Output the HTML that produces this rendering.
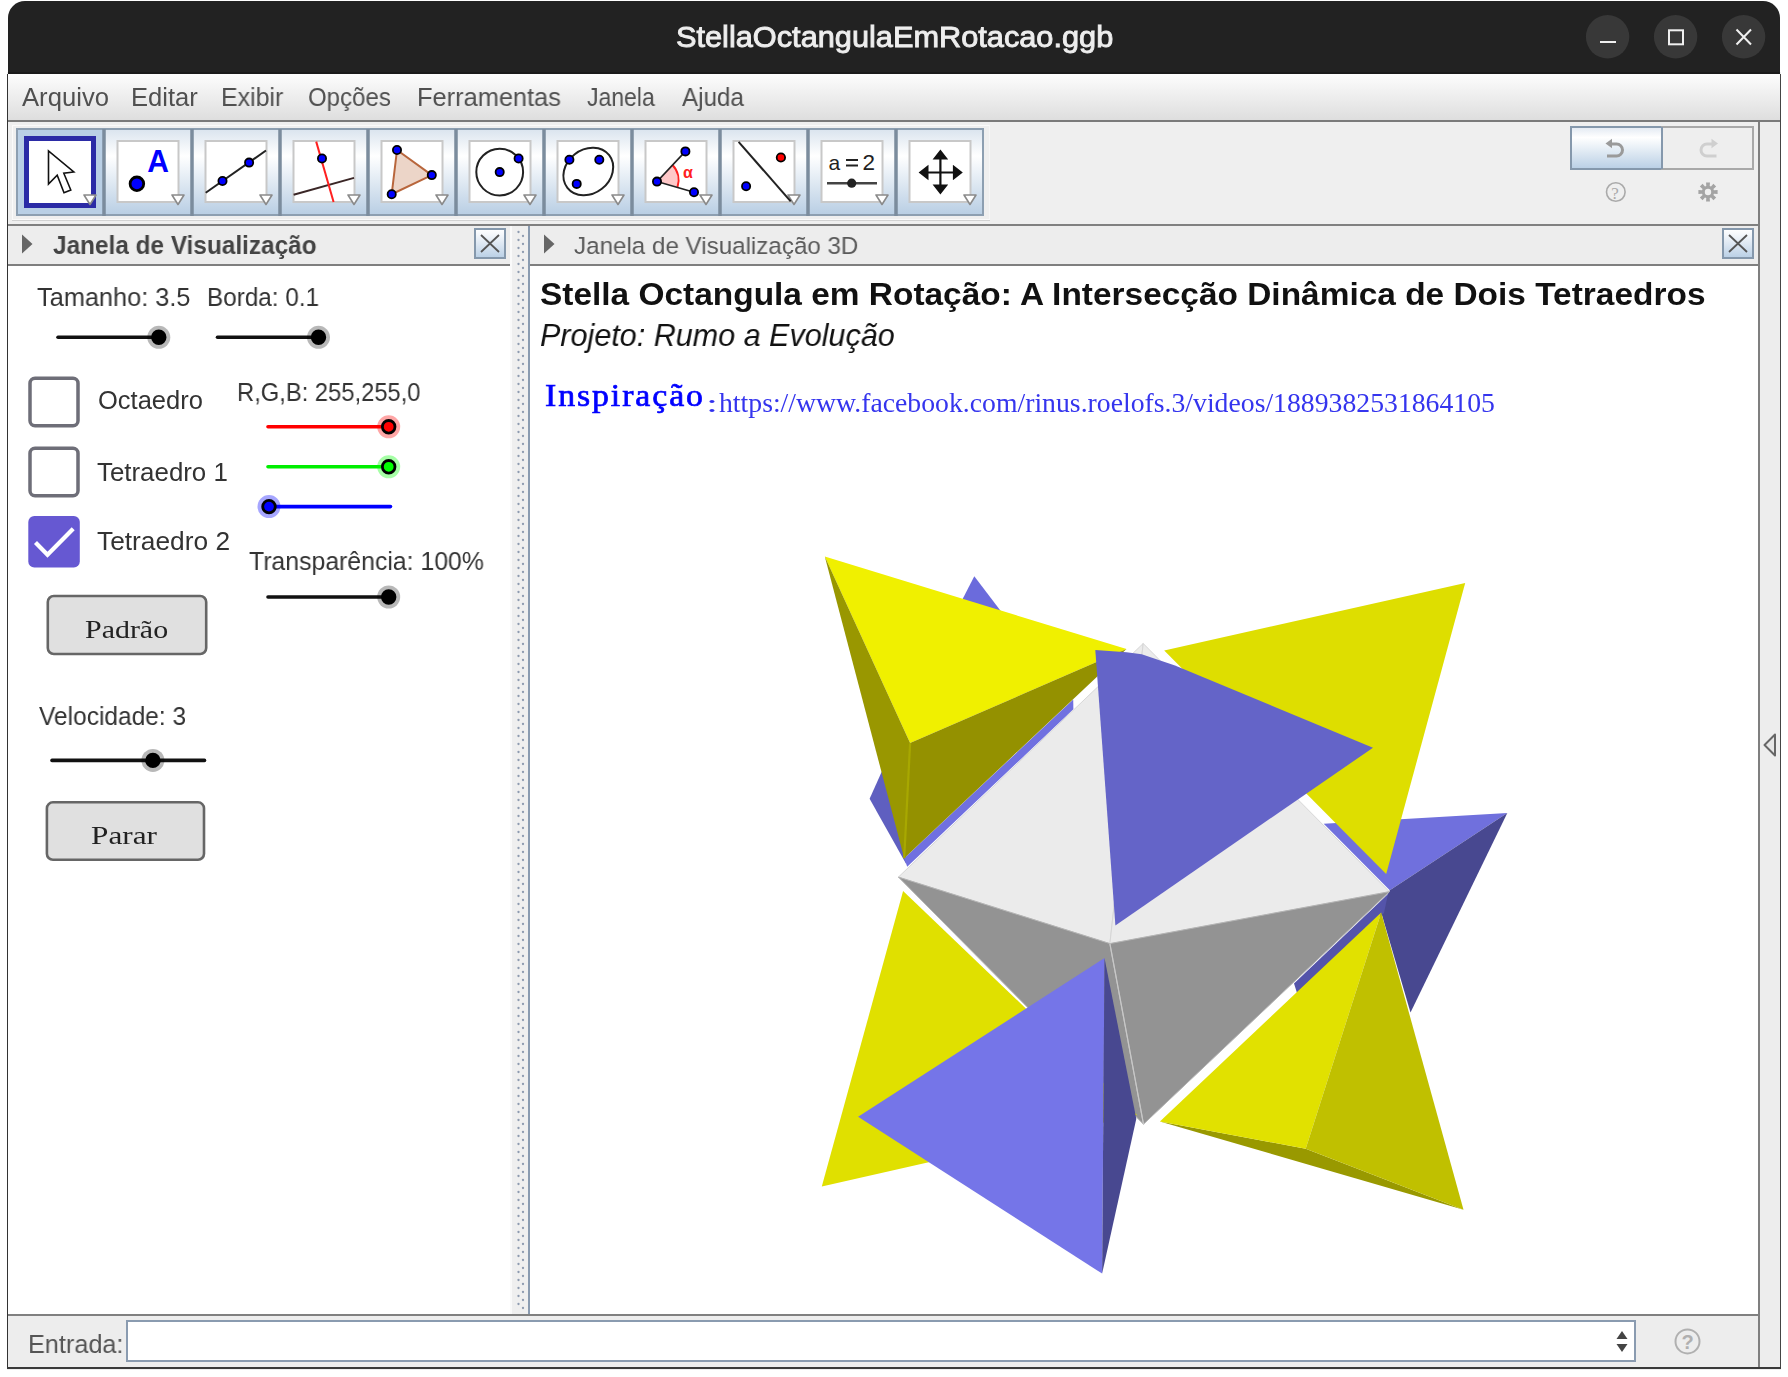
<!DOCTYPE html>
<html><head><meta charset="utf-8">
<style>
*{box-sizing:border-box;margin:0;padding:0}
html,body{width:1788px;height:1377px;overflow:hidden;background:#fff;font-family:"Liberation Sans",sans-serif}
.a{position:absolute}
.t{position:absolute;white-space:nowrap;transform-origin:0 0;will-change:transform}
svg{position:absolute;left:0;top:0}
</style></head>
<body>
<div class="a" style="left:7px;top:72px;width:1774px;height:1298px;background:#efefef"></div>
<div class="a" style="left:8px;top:1px;width:1772px;height:73px;background:#222;border-radius:17px 17px 0 0"></div>
<div class="a" style="left:8px;top:72px;width:1772px;height:2px;background:#1b1b1b"></div>
<!-- menubar -->
<div class="a" style="left:8px;top:74px;width:1772px;height:46px;background:linear-gradient(#fdfdfd,#f2f2f2 35%,#dedede)"></div>
<div class="a" style="left:8px;top:120px;width:1772px;height:2px;background:#7a7a7a"></div>
<!-- left/right window borders -->
<div class="a" style="left:7px;top:74px;width:1px;height:1295px;background:#333"></div>
<div class="a" style="left:1780px;top:74px;width:1px;height:1295px;background:#444"></div>
<!-- toolbar -->
<div class="a" style="left:8px;top:122px;width:1750px;height:102px;background:#efefef"></div>
<div class="a" style="left:12px;top:220px;width:978px;height:1px;background:#d2d2d2"></div>
<div class="a" style="left:12px;top:125px;width:978px;height:95px;border:1px solid #fafafa;border-right-color:#f6f6f6"></div>
<div class="a" style="left:8px;top:224px;width:1751px;height:2px;background:#808080"></div>
<!-- right strip -->
<div class="a" style="left:1758px;top:122px;width:2px;height:1247px;background:#7f7f7f"></div>
<div class="a" style="left:1760px;top:122px;width:20px;height:1247px;background:#ededed"></div>
<!-- panel headers -->
<div class="a" style="left:8px;top:226px;width:502px;height:38px;background:#ededed"></div>
<div class="a" style="left:8px;top:264px;width:502px;height:2px;background:#7f7f7f"></div>
<div class="a" style="left:510px;top:226px;width:18px;height:1088px;background:#efefef"></div>
<div class="a" style="left:510px;top:226px;width:2px;height:1088px;background:#fafafa"></div>
<div class="a" style="left:528px;top:226px;width:2px;height:1088px;background:#8a9bb0"></div>
<div class="a" style="left:530px;top:226px;width:1228px;height:38px;background:#ededed"></div>
<div class="a" style="left:530px;top:264px;width:1228px;height:2px;background:#7f7f7f"></div>
<!-- panels -->
<div class="a" style="left:8px;top:266px;width:502px;height:1048px;background:#fff"></div>
<div class="a" style="left:530px;top:266px;width:1228px;height:1048px;background:#fff"></div>
<!-- input bar -->
<div class="a" style="left:8px;top:1314px;width:1751px;height:2px;background:#808080"></div>
<div class="a" style="left:8px;top:1316px;width:1750px;height:51px;background:#ededed"></div>
<div class="a" style="left:7px;top:1367px;width:1774px;height:2px;background:#3a3a3a"></div>
<div class="a" style="left:126px;top:1320px;width:1510px;height:42px;background:#fff;border:2px solid #8a9bb0"></div>
<svg width="1788" height="1377" viewBox="0 0 1788 1377">
<defs>
<linearGradient id="btng" x1="0" y1="0" x2="0" y2="1"><stop offset="0" stop-color="#dae4ee"/><stop offset="0.31" stop-color="#ffffff"/><stop offset="1" stop-color="#b7cde3"/></linearGradient>
<linearGradient id="undog" x1="0" y1="0" x2="0" y2="1"><stop offset="0" stop-color="#e2e9f2"/><stop offset="0.25" stop-color="#ffffff"/><stop offset="1" stop-color="#b9cfe5"/></linearGradient>
<linearGradient id="closeg" x1="0" y1="0" x2="0" y2="1"><stop offset="0" stop-color="#ffffff"/><stop offset="0.2" stop-color="#f4f7fb"/><stop offset="1" stop-color="#b9cfe5"/></linearGradient>
</defs>
<!-- window buttons -->
<circle cx="1607.6" cy="36.8" r="21.7" fill="#383838"/>
<circle cx="1675.6" cy="36.8" r="21.7" fill="#383838"/>
<circle cx="1743.6" cy="36.8" r="21.7" fill="#383838"/>
<rect x="1600" y="41" width="16" height="2" fill="#f0f0f0"/>
<rect x="1669" y="30.3" width="14" height="14" fill="none" stroke="#f0f0f0" stroke-width="2"/>
<path d="M1736.5,29.5 L1751,44.5 M1751,29.5 L1736.5,44.5" stroke="#f0f0f0" stroke-width="2"/>
<rect x="16" y="129" width="88" height="87" fill="#b9cfe5"/><rect x="104" y="129" width="88" height="87" fill="url(#btng)"/><rect x="192" y="129" width="88" height="87" fill="url(#btng)"/><rect x="280" y="129" width="88" height="87" fill="url(#btng)"/><rect x="368" y="129" width="88" height="87" fill="url(#btng)"/><rect x="456" y="129" width="88" height="87" fill="url(#btng)"/><rect x="544" y="129" width="88" height="87" fill="url(#btng)"/><rect x="632" y="129" width="88" height="87" fill="url(#btng)"/><rect x="720" y="129" width="88" height="87" fill="url(#btng)"/><rect x="808" y="129" width="88" height="87" fill="url(#btng)"/><rect x="896" y="129" width="88" height="87" fill="url(#btng)"/><rect x="17" y="129" width="966" height="86" fill="none" stroke="#8d9fb1" stroke-width="2"/><rect x="102.25" y="129" width="3.5" height="87" fill="#7b8c9d"/><rect x="190.25" y="129" width="3.5" height="87" fill="#7b8c9d"/><rect x="278.25" y="129" width="3.5" height="87" fill="#7b8c9d"/><rect x="366.25" y="129" width="3.5" height="87" fill="#7b8c9d"/><rect x="454.25" y="129" width="3.5" height="87" fill="#7b8c9d"/><rect x="542.25" y="129" width="3.5" height="87" fill="#7b8c9d"/><rect x="630.25" y="129" width="3.5" height="87" fill="#7b8c9d"/><rect x="718.25" y="129" width="3.5" height="87" fill="#7b8c9d"/><rect x="806.25" y="129" width="3.5" height="87" fill="#7b8c9d"/><rect x="894.25" y="129" width="3.5" height="87" fill="#7b8c9d"/><rect x="117.5" y="141" width="61" height="61" fill="#fff" stroke="#c8c8c8" stroke-width="2"/><rect x="205.5" y="141" width="61" height="61" fill="#fff" stroke="#c8c8c8" stroke-width="2"/><rect x="293.5" y="141" width="61" height="61" fill="#fff" stroke="#c8c8c8" stroke-width="2"/><rect x="381.5" y="141" width="61" height="61" fill="#fff" stroke="#c8c8c8" stroke-width="2"/><rect x="469.5" y="141" width="61" height="61" fill="#fff" stroke="#c8c8c8" stroke-width="2"/><rect x="557.5" y="141" width="61" height="61" fill="#fff" stroke="#c8c8c8" stroke-width="2"/><rect x="645.5" y="141" width="61" height="61" fill="#fff" stroke="#c8c8c8" stroke-width="2"/><rect x="733.5" y="141" width="61" height="61" fill="#fff" stroke="#c8c8c8" stroke-width="2"/><rect x="821.5" y="141" width="61" height="61" fill="#fff" stroke="#c8c8c8" stroke-width="2"/><rect x="909.5" y="141" width="61" height="61" fill="#fff" stroke="#c8c8c8" stroke-width="2"/><rect x="26.5" y="138.5" width="67" height="67" fill="#fff" stroke="#2b2ba6" stroke-width="5"/><path d="M84,195 L96,195 L90,204.5 Z" fill="#fff" stroke="#8a8a8a" stroke-width="1.6" stroke-linejoin="round"/><path d="M172,195 L184,195 L178,204.5 Z" fill="#fff" stroke="#8a8a8a" stroke-width="1.6" stroke-linejoin="round"/><path d="M260,195 L272,195 L266,204.5 Z" fill="#fff" stroke="#8a8a8a" stroke-width="1.6" stroke-linejoin="round"/><path d="M348,195 L360,195 L354,204.5 Z" fill="#fff" stroke="#8a8a8a" stroke-width="1.6" stroke-linejoin="round"/><path d="M436,195 L448,195 L442,204.5 Z" fill="#fff" stroke="#8a8a8a" stroke-width="1.6" stroke-linejoin="round"/><path d="M524,195 L536,195 L530,204.5 Z" fill="#fff" stroke="#8a8a8a" stroke-width="1.6" stroke-linejoin="round"/><path d="M612,195 L624,195 L618,204.5 Z" fill="#fff" stroke="#8a8a8a" stroke-width="1.6" stroke-linejoin="round"/><path d="M700,195 L712,195 L706,204.5 Z" fill="#fff" stroke="#8a8a8a" stroke-width="1.6" stroke-linejoin="round"/><path d="M788,195 L800,195 L794,204.5 Z" fill="#fff" stroke="#8a8a8a" stroke-width="1.6" stroke-linejoin="round"/><path d="M876,195 L888,195 L882,204.5 Z" fill="#fff" stroke="#8a8a8a" stroke-width="1.6" stroke-linejoin="round"/><path d="M964,195 L976,195 L970,204.5 Z" fill="#fff" stroke="#8a8a8a" stroke-width="1.6" stroke-linejoin="round"/>
<path d="M48.5,151 L48.5,184 L57.2,175.2 L64,192.8 L70.8,190 L63.8,173.2 L73.8,172 Z" fill="#fff" stroke="#111" stroke-width="1.6" stroke-linejoin="miter"/><circle cx="136.9" cy="183.8" r="6.8" fill="#0000ff" stroke="#000" stroke-width="2.8"/><text x="147.2" y="171.8" font-family="Liberation Sans" font-weight="bold" font-size="31" fill="#0000ff" transform="translate(147.2,171.8) scale(0.97,1.03) translate(-147.2,-171.8)">A</text><line x1="205.7" y1="192.8" x2="266" y2="150.5" stroke="#222" stroke-width="2"/><circle cx="222.5" cy="181" r="4.1" fill="#0000ff" stroke="#000" stroke-width="1.8"/><circle cx="249.1" cy="162.6" r="4.1" fill="#0000ff" stroke="#000" stroke-width="1.8"/><line x1="293.6" y1="194.8" x2="354" y2="177.9" stroke="#3a2626" stroke-width="2"/><line x1="316.2" y1="141.6" x2="333.6" y2="202" stroke="#ff2020" stroke-width="2"/><circle cx="322" cy="158.5" r="4.1" fill="#0000ff" stroke="#000" stroke-width="1.8"/><path d="M397,150 L431.8,175.1 L391.7,194.2 Z" fill="#ecd5c8" stroke="#b8663c" stroke-width="2"/><circle cx="397" cy="150" r="4.1" fill="#0000ff" stroke="#000" stroke-width="1.8"/><circle cx="431.8" cy="175.1" r="4.1" fill="#0000ff" stroke="#000" stroke-width="1.8"/><circle cx="391.7" cy="194.2" r="4.1" fill="#0000ff" stroke="#000" stroke-width="1.8"/><circle cx="499.7" cy="172.1" r="23.4" fill="none" stroke="#222" stroke-width="2"/><circle cx="499.7" cy="172.1" r="4.1" fill="#0000ff" stroke="#000" stroke-width="1.8"/><circle cx="518.6" cy="158.5" r="4.1" fill="#0000ff" stroke="#000" stroke-width="1.8"/><ellipse cx="588.3" cy="171.5" rx="26.5" ry="22" transform="rotate(-38 588.3 171.5)" fill="none" stroke="#222" stroke-width="2"/><circle cx="569.4" cy="159.7" r="4.1" fill="#0000ff" stroke="#000" stroke-width="1.8"/><circle cx="599.3" cy="159.7" r="4.1" fill="#0000ff" stroke="#000" stroke-width="1.8"/><circle cx="576.7" cy="183.9" r="4.1" fill="#0000ff" stroke="#000" stroke-width="1.8"/><path d="M657,181.6 L672.5,165 A22,22 0 0 1 677.5,187 Z" fill="#ffc8c8" stroke="none"/><path d="M672.5,165 A22,22 0 0 1 677.5,187" fill="none" stroke="#ff2020" stroke-width="2"/><line x1="657" y1="181.6" x2="685.4" y2="151.4" stroke="#222" stroke-width="1.6"/><line x1="657" y1="181.6" x2="694" y2="192.2" stroke="#222" stroke-width="1.6"/><circle cx="657" cy="181.6" r="4.1" fill="#0000ff" stroke="#000" stroke-width="1.8"/><circle cx="685.4" cy="151.4" r="4.1" fill="#0000ff" stroke="#000" stroke-width="1.8"/><circle cx="694" cy="192.2" r="4.1" fill="#0000ff" stroke="#000" stroke-width="1.8"/><text x="683" y="178" font-family="Liberation Sans" font-size="16" font-weight="bold" fill="#ff2020">α</text><line x1="738.6" y1="141.9" x2="790.7" y2="201.3" stroke="#222" stroke-width="2"/><circle cx="746.1" cy="186.2" r="4.1" fill="#0000ff" stroke="#000" stroke-width="1.8"/><circle cx="780.9" cy="157.5" r="4.2" fill="#ff0000" stroke="#000" stroke-width="1.8"/><text x="828.5" y="170.3" font-family="Liberation Sans" font-size="21" fill="#222">a</text><rect x="846" y="159" width="12" height="2" fill="#222"/><rect x="846" y="164.5" width="12" height="2" fill="#222"/><text x="862.5" y="170.3" font-family="Liberation Sans" font-size="22.5" fill="#222">2</text><line x1="827" y1="183.2" x2="877" y2="183.2" stroke="#444" stroke-width="2.6"/><circle cx="851.7" cy="183.2" r="4.6" fill="#222"/><path d="M940.4,155 V190 M922,172.5 H959" stroke="#111" stroke-width="2.2"/><path d="M940.4,149.6 L948.2,159.5 L932.6,159.5 Z M940.4,194.4 L948.2,184.5 L932.6,184.5 Z M918.6,172.5 L928.5,164.7 L928.5,180.3 Z M962.8,172.5 L952.9,164.7 L952.9,180.3 Z" fill="#111"/>

<rect x="1571" y="127" width="91" height="42" fill="url(#undog)" stroke="#8598ac" stroke-width="2"/>
<rect x="1662" y="127" width="91" height="42" fill="#eeeeee" stroke="#a8a8a8" stroke-width="2"/>
<rect x="1661" y="127" width="2" height="42" fill="#8598ac"/>
<path d="M1610.5,144 H1616.5 A6,6 0 0 1 1616.5,156 H1607" fill="none" stroke="#9a9a9a" stroke-width="3"/>
<path d="M1605.5,143.5 L1612,138.8 L1612,148.2 Z" fill="#9a9a9a"/>
<path d="M1713,144 H1707 A6,6 0 0 0 1707,156 H1716.5" fill="none" stroke="#cfcfcf" stroke-width="3"/>
<path d="M1718,143.5 L1711.5,138.8 L1711.5,148.2 Z" fill="#cfcfcf"/>
<circle cx="1615.8" cy="192" r="9.3" fill="none" stroke="#aaaaaa" stroke-width="1.6"/>
<text x="1611.3" y="198.5" font-family="Liberation Serif" font-size="17" fill="#aaaaaa">?</text>
<path d="M1713.96,190.29 L1717.60,190.05 L1717.60,193.95 L1713.96,193.71 L1713.42,195.00 L1716.17,197.41 L1713.41,200.17 L1711.00,197.42 L1709.71,197.96 L1709.95,201.60 L1706.05,201.60 L1706.29,197.96 L1705.00,197.42 L1702.59,200.17 L1699.83,197.41 L1702.58,195.00 L1702.04,193.71 L1698.40,193.95 L1698.40,190.05 L1702.04,190.29 L1702.58,189.00 L1699.83,186.59 L1702.59,183.83 L1705.00,186.58 L1706.29,186.04 L1706.05,182.40 L1709.95,182.40 L1709.71,186.04 L1711.00,186.58 L1713.41,183.83 L1716.17,186.59 L1713.42,189.00 Z M1711.2,192 A3.2,3.2 0 1 0 1704.8,192 A3.2,3.2 0 1 0 1711.2,192 Z" fill="#a4a4a4" fill-rule="evenodd"/>
<line x1="58" y1="337.3" x2="158.8" y2="337.3" stroke="#111" stroke-width="3.6" stroke-linecap="round"/><circle cx="158.8" cy="337.3" r="11.5" fill="rgba(0,0,0,0.28)"/><circle cx="158.8" cy="337.3" r="6.3" fill="#000" stroke="#000" stroke-width="2.8"/><line x1="217.5" y1="337.3" x2="318.5" y2="337.3" stroke="#111" stroke-width="3.6" stroke-linecap="round"/><circle cx="318.5" cy="337.3" r="11.5" fill="rgba(0,0,0,0.28)"/><circle cx="318.5" cy="337.3" r="6.3" fill="#000" stroke="#000" stroke-width="2.8"/><line x1="268" y1="426.8" x2="388.7" y2="426.8" stroke="#ff0000" stroke-width="3.6" stroke-linecap="round"/><circle cx="388.7" cy="426.8" r="11.5" fill="rgba(255,0,0,0.35)"/><circle cx="388.7" cy="426.8" r="6.3" fill="#ff0000" stroke="#000" stroke-width="2.8"/><line x1="268" y1="466.8" x2="388.7" y2="466.8" stroke="#00ee00" stroke-width="3.6" stroke-linecap="round"/><circle cx="388.7" cy="466.8" r="11.5" fill="rgba(0,255,0,0.35)"/><circle cx="388.7" cy="466.8" r="6.3" fill="#00ff00" stroke="#000" stroke-width="2.8"/><line x1="269" y1="506.6" x2="390.5" y2="506.6" stroke="#0000ff" stroke-width="3.6" stroke-linecap="round"/><circle cx="269" cy="506.6" r="11.5" fill="rgba(0,0,255,0.35)"/><circle cx="269" cy="506.6" r="6.3" fill="#0000ff" stroke="#000" stroke-width="2.8"/><line x1="268" y1="597" x2="388.7" y2="597" stroke="#111" stroke-width="3.6" stroke-linecap="round"/><circle cx="388.7" cy="597" r="11.5" fill="rgba(0,0,0,0.28)"/><circle cx="388.7" cy="597" r="6.3" fill="#000" stroke="#000" stroke-width="2.8"/><line x1="52" y1="760.4" x2="204.5" y2="760.4" stroke="#111" stroke-width="3.6" stroke-linecap="round"/><circle cx="152.9" cy="760.4" r="11.5" fill="rgba(0,0,0,0.28)"/><circle cx="152.9" cy="760.4" r="6.3" fill="#000" stroke="#000" stroke-width="2.8"/><rect x="30" y="378.25" width="48" height="47.5" rx="5" fill="#fff" stroke="#6e6e78" stroke-width="3.5"/><rect x="30" y="448.15" width="48" height="47.5" rx="5" fill="#fff" stroke="#6e6e78" stroke-width="3.5"/><rect x="28.3" y="516" width="51.5" height="51.5" rx="6" fill="#6658d2"/><path d="M35.5,542.5 L47.5,554.8 L73.2,528.8" fill="none" stroke="#fff" stroke-width="4.2"/><rect x="47.8" y="596" width="158.4" height="58" rx="6" fill="#e0e0e0" stroke="#666" stroke-width="2.6"/><rect x="46.9" y="802.3" width="157.1" height="57.5" rx="6" fill="#e0e0e0" stroke="#666" stroke-width="2.6"/>
<polygon points="974.3,576.3 958,608 1003,614" fill="#6b6bdc" />
<polygon points="887,760 869.6,798.7 906.2,864 906,780" fill="#5f5fc0" />
<polygon points="904.2,858.2 1073.2,699.6 1073.4,709.2 907.2,866.8" fill="#7070e0" />
<polygon points="1323.7,823.7 1507.3,813 1389.8,890.2" fill="#7070dd" />
<polygon points="1507.3,813 1389.8,890.2 1383.7,902 1381.2,912.5 1410.5,1012.5" fill="#484890" />
<polygon points="1294,983.5 1388,894 1384,913 1297,993" fill="#5454aa" />
<polygon points="824.8,556.6 1126.5,649.0 910.1,743.1" fill="#f0f000" />
<polygon points="824.8,556.6 910.1,743.1 904.2,858.2" fill="#999700" />
<polygon points="910.1,743.1 1126.5,649.0 904.2,858.2" fill="#949100" />
<line x1="910.1" y1="743.1" x2="904.2" y2="858.2" stroke="#a8a800" stroke-width="2.2"/>
<polygon points="1164.2,650.4 1465.2,583 1386.2,874" fill="#dede00" />
<polygon points="1143.2,643.5 898.4,877.1 1109.9,943.6" fill="#ebebeb" stroke="#d6d6d6" stroke-width="1" stroke-linejoin="round"/>
<polygon points="1143.2,643.5 1109.9,943.6 1389.3,891.7" fill="#ebebeb" stroke="#d6d6d6" stroke-width="1" stroke-linejoin="round"/>
<polygon points="898.4,877.1 1109.9,943.6 1143.5,1124.2" fill="#939393" stroke="#b4b4b4" stroke-width="1"/>
<polygon points="1109.9,943.6 1389.3,891.7 1143.5,1124.2" fill="#939393" stroke="#b4b4b4" stroke-width="1"/>
<line x1="1109.9" y1="943.6" x2="1143.5" y2="1124.2" stroke="#c8c8c8" stroke-width="1.2"/>
<polygon points="1095.3,650.1 1126.5,652.2 1141.7,654.2 1175,665.6 1373,747.7 1115.4,925.4" fill="#6464c8" />
<polygon points="903.1,891 821.8,1186.5 1137,1115" fill="#e0e000" />
<polygon points="858.1,1116.7 1104.5,958.1 1102.1,1273.6" fill="#7575e8" />
<polygon points="1104.5,958.1 1136.3,1118.8 1102.1,1273.6" fill="#484890" />
<polygon points="1159.9,1121.5 1305.7,1148.7 1463.5,1209.7" fill="#999900" />
<polygon points="1381.2,912.5 1159.9,1121.5 1305.7,1148.7" fill="#e1e100" />
<polygon points="1381.2,912.5 1305.7,1148.7 1463.5,1209.7" fill="#c0c000" />
<!-- header triangles -->
<path d="M22,234.5 L32.5,244 L22,253.5 Z" fill="#666"/>
<path d="M544,234.5 L554.5,244 L544,253.5 Z" fill="#666"/>
<rect x="475" y="229" width="30" height="29" fill="url(#closeg)" stroke="#8598ac" stroke-width="2"/>
<path d="M481,235 L499,252 M499,235 L481,252" stroke="#555" stroke-width="1.8"/>
<rect x="1723" y="229" width="30" height="29" fill="url(#closeg)" stroke="#8598ac" stroke-width="2"/>
<path d="M1729,235 L1747,252 M1747,235 L1729,252" stroke="#555" stroke-width="1.8"/>
<!-- divider dots -->
<circle cx="518.5" cy="232" r="1.15" fill="#8e9bb0"/><circle cx="523" cy="236" r="1.15" fill="#8e9bb0"/><circle cx="518.5" cy="240" r="1.15" fill="#8e9bb0"/><circle cx="523" cy="244" r="1.15" fill="#8e9bb0"/><circle cx="518.5" cy="248" r="1.15" fill="#8e9bb0"/><circle cx="523" cy="252" r="1.15" fill="#8e9bb0"/><circle cx="518.5" cy="256" r="1.15" fill="#8e9bb0"/><circle cx="523" cy="260" r="1.15" fill="#8e9bb0"/><circle cx="518.5" cy="264" r="1.15" fill="#8e9bb0"/><circle cx="523" cy="268" r="1.15" fill="#8e9bb0"/><circle cx="518.5" cy="272" r="1.15" fill="#8e9bb0"/><circle cx="523" cy="276" r="1.15" fill="#8e9bb0"/><circle cx="518.5" cy="280" r="1.15" fill="#8e9bb0"/><circle cx="523" cy="284" r="1.15" fill="#8e9bb0"/><circle cx="518.5" cy="288" r="1.15" fill="#8e9bb0"/><circle cx="523" cy="292" r="1.15" fill="#8e9bb0"/><circle cx="518.5" cy="296" r="1.15" fill="#8e9bb0"/><circle cx="523" cy="300" r="1.15" fill="#8e9bb0"/><circle cx="518.5" cy="304" r="1.15" fill="#8e9bb0"/><circle cx="523" cy="308" r="1.15" fill="#8e9bb0"/><circle cx="518.5" cy="312" r="1.15" fill="#8e9bb0"/><circle cx="523" cy="316" r="1.15" fill="#8e9bb0"/><circle cx="518.5" cy="320" r="1.15" fill="#8e9bb0"/><circle cx="523" cy="324" r="1.15" fill="#8e9bb0"/><circle cx="518.5" cy="328" r="1.15" fill="#8e9bb0"/><circle cx="523" cy="332" r="1.15" fill="#8e9bb0"/><circle cx="518.5" cy="336" r="1.15" fill="#8e9bb0"/><circle cx="523" cy="340" r="1.15" fill="#8e9bb0"/><circle cx="518.5" cy="344" r="1.15" fill="#8e9bb0"/><circle cx="523" cy="348" r="1.15" fill="#8e9bb0"/><circle cx="518.5" cy="352" r="1.15" fill="#8e9bb0"/><circle cx="523" cy="356" r="1.15" fill="#8e9bb0"/><circle cx="518.5" cy="360" r="1.15" fill="#8e9bb0"/><circle cx="523" cy="364" r="1.15" fill="#8e9bb0"/><circle cx="518.5" cy="368" r="1.15" fill="#8e9bb0"/><circle cx="523" cy="372" r="1.15" fill="#8e9bb0"/><circle cx="518.5" cy="376" r="1.15" fill="#8e9bb0"/><circle cx="523" cy="380" r="1.15" fill="#8e9bb0"/><circle cx="518.5" cy="384" r="1.15" fill="#8e9bb0"/><circle cx="523" cy="388" r="1.15" fill="#8e9bb0"/><circle cx="518.5" cy="392" r="1.15" fill="#8e9bb0"/><circle cx="523" cy="396" r="1.15" fill="#8e9bb0"/><circle cx="518.5" cy="400" r="1.15" fill="#8e9bb0"/><circle cx="523" cy="404" r="1.15" fill="#8e9bb0"/><circle cx="518.5" cy="408" r="1.15" fill="#8e9bb0"/><circle cx="523" cy="412" r="1.15" fill="#8e9bb0"/><circle cx="518.5" cy="416" r="1.15" fill="#8e9bb0"/><circle cx="523" cy="420" r="1.15" fill="#8e9bb0"/><circle cx="518.5" cy="424" r="1.15" fill="#8e9bb0"/><circle cx="523" cy="428" r="1.15" fill="#8e9bb0"/><circle cx="518.5" cy="432" r="1.15" fill="#8e9bb0"/><circle cx="523" cy="436" r="1.15" fill="#8e9bb0"/><circle cx="518.5" cy="440" r="1.15" fill="#8e9bb0"/><circle cx="523" cy="444" r="1.15" fill="#8e9bb0"/><circle cx="518.5" cy="448" r="1.15" fill="#8e9bb0"/><circle cx="523" cy="452" r="1.15" fill="#8e9bb0"/><circle cx="518.5" cy="456" r="1.15" fill="#8e9bb0"/><circle cx="523" cy="460" r="1.15" fill="#8e9bb0"/><circle cx="518.5" cy="464" r="1.15" fill="#8e9bb0"/><circle cx="523" cy="468" r="1.15" fill="#8e9bb0"/><circle cx="518.5" cy="472" r="1.15" fill="#8e9bb0"/><circle cx="523" cy="476" r="1.15" fill="#8e9bb0"/><circle cx="518.5" cy="480" r="1.15" fill="#8e9bb0"/><circle cx="523" cy="484" r="1.15" fill="#8e9bb0"/><circle cx="518.5" cy="488" r="1.15" fill="#8e9bb0"/><circle cx="523" cy="492" r="1.15" fill="#8e9bb0"/><circle cx="518.5" cy="496" r="1.15" fill="#8e9bb0"/><circle cx="523" cy="500" r="1.15" fill="#8e9bb0"/><circle cx="518.5" cy="504" r="1.15" fill="#8e9bb0"/><circle cx="523" cy="508" r="1.15" fill="#8e9bb0"/><circle cx="518.5" cy="512" r="1.15" fill="#8e9bb0"/><circle cx="523" cy="516" r="1.15" fill="#8e9bb0"/><circle cx="518.5" cy="520" r="1.15" fill="#8e9bb0"/><circle cx="523" cy="524" r="1.15" fill="#8e9bb0"/><circle cx="518.5" cy="528" r="1.15" fill="#8e9bb0"/><circle cx="523" cy="532" r="1.15" fill="#8e9bb0"/><circle cx="518.5" cy="536" r="1.15" fill="#8e9bb0"/><circle cx="523" cy="540" r="1.15" fill="#8e9bb0"/><circle cx="518.5" cy="544" r="1.15" fill="#8e9bb0"/><circle cx="523" cy="548" r="1.15" fill="#8e9bb0"/><circle cx="518.5" cy="552" r="1.15" fill="#8e9bb0"/><circle cx="523" cy="556" r="1.15" fill="#8e9bb0"/><circle cx="518.5" cy="560" r="1.15" fill="#8e9bb0"/><circle cx="523" cy="564" r="1.15" fill="#8e9bb0"/><circle cx="518.5" cy="568" r="1.15" fill="#8e9bb0"/><circle cx="523" cy="572" r="1.15" fill="#8e9bb0"/><circle cx="518.5" cy="576" r="1.15" fill="#8e9bb0"/><circle cx="523" cy="580" r="1.15" fill="#8e9bb0"/><circle cx="518.5" cy="584" r="1.15" fill="#8e9bb0"/><circle cx="523" cy="588" r="1.15" fill="#8e9bb0"/><circle cx="518.5" cy="592" r="1.15" fill="#8e9bb0"/><circle cx="523" cy="596" r="1.15" fill="#8e9bb0"/><circle cx="518.5" cy="600" r="1.15" fill="#8e9bb0"/><circle cx="523" cy="604" r="1.15" fill="#8e9bb0"/><circle cx="518.5" cy="608" r="1.15" fill="#8e9bb0"/><circle cx="523" cy="612" r="1.15" fill="#8e9bb0"/><circle cx="518.5" cy="616" r="1.15" fill="#8e9bb0"/><circle cx="523" cy="620" r="1.15" fill="#8e9bb0"/><circle cx="518.5" cy="624" r="1.15" fill="#8e9bb0"/><circle cx="523" cy="628" r="1.15" fill="#8e9bb0"/><circle cx="518.5" cy="632" r="1.15" fill="#8e9bb0"/><circle cx="523" cy="636" r="1.15" fill="#8e9bb0"/><circle cx="518.5" cy="640" r="1.15" fill="#8e9bb0"/><circle cx="523" cy="644" r="1.15" fill="#8e9bb0"/><circle cx="518.5" cy="648" r="1.15" fill="#8e9bb0"/><circle cx="523" cy="652" r="1.15" fill="#8e9bb0"/><circle cx="518.5" cy="656" r="1.15" fill="#8e9bb0"/><circle cx="523" cy="660" r="1.15" fill="#8e9bb0"/><circle cx="518.5" cy="664" r="1.15" fill="#8e9bb0"/><circle cx="523" cy="668" r="1.15" fill="#8e9bb0"/><circle cx="518.5" cy="672" r="1.15" fill="#8e9bb0"/><circle cx="523" cy="676" r="1.15" fill="#8e9bb0"/><circle cx="518.5" cy="680" r="1.15" fill="#8e9bb0"/><circle cx="523" cy="684" r="1.15" fill="#8e9bb0"/><circle cx="518.5" cy="688" r="1.15" fill="#8e9bb0"/><circle cx="523" cy="692" r="1.15" fill="#8e9bb0"/><circle cx="518.5" cy="696" r="1.15" fill="#8e9bb0"/><circle cx="523" cy="700" r="1.15" fill="#8e9bb0"/><circle cx="518.5" cy="704" r="1.15" fill="#8e9bb0"/><circle cx="523" cy="708" r="1.15" fill="#8e9bb0"/><circle cx="518.5" cy="712" r="1.15" fill="#8e9bb0"/><circle cx="523" cy="716" r="1.15" fill="#8e9bb0"/><circle cx="518.5" cy="720" r="1.15" fill="#8e9bb0"/><circle cx="523" cy="724" r="1.15" fill="#8e9bb0"/><circle cx="518.5" cy="728" r="1.15" fill="#8e9bb0"/><circle cx="523" cy="732" r="1.15" fill="#8e9bb0"/><circle cx="518.5" cy="736" r="1.15" fill="#8e9bb0"/><circle cx="523" cy="740" r="1.15" fill="#8e9bb0"/><circle cx="518.5" cy="744" r="1.15" fill="#8e9bb0"/><circle cx="523" cy="748" r="1.15" fill="#8e9bb0"/><circle cx="518.5" cy="752" r="1.15" fill="#8e9bb0"/><circle cx="523" cy="756" r="1.15" fill="#8e9bb0"/><circle cx="518.5" cy="760" r="1.15" fill="#8e9bb0"/><circle cx="523" cy="764" r="1.15" fill="#8e9bb0"/><circle cx="518.5" cy="768" r="1.15" fill="#8e9bb0"/><circle cx="523" cy="772" r="1.15" fill="#8e9bb0"/><circle cx="518.5" cy="776" r="1.15" fill="#8e9bb0"/><circle cx="523" cy="780" r="1.15" fill="#8e9bb0"/><circle cx="518.5" cy="784" r="1.15" fill="#8e9bb0"/><circle cx="523" cy="788" r="1.15" fill="#8e9bb0"/><circle cx="518.5" cy="792" r="1.15" fill="#8e9bb0"/><circle cx="523" cy="796" r="1.15" fill="#8e9bb0"/><circle cx="518.5" cy="800" r="1.15" fill="#8e9bb0"/><circle cx="523" cy="804" r="1.15" fill="#8e9bb0"/><circle cx="518.5" cy="808" r="1.15" fill="#8e9bb0"/><circle cx="523" cy="812" r="1.15" fill="#8e9bb0"/><circle cx="518.5" cy="816" r="1.15" fill="#8e9bb0"/><circle cx="523" cy="820" r="1.15" fill="#8e9bb0"/><circle cx="518.5" cy="824" r="1.15" fill="#8e9bb0"/><circle cx="523" cy="828" r="1.15" fill="#8e9bb0"/><circle cx="518.5" cy="832" r="1.15" fill="#8e9bb0"/><circle cx="523" cy="836" r="1.15" fill="#8e9bb0"/><circle cx="518.5" cy="840" r="1.15" fill="#8e9bb0"/><circle cx="523" cy="844" r="1.15" fill="#8e9bb0"/><circle cx="518.5" cy="848" r="1.15" fill="#8e9bb0"/><circle cx="523" cy="852" r="1.15" fill="#8e9bb0"/><circle cx="518.5" cy="856" r="1.15" fill="#8e9bb0"/><circle cx="523" cy="860" r="1.15" fill="#8e9bb0"/><circle cx="518.5" cy="864" r="1.15" fill="#8e9bb0"/><circle cx="523" cy="868" r="1.15" fill="#8e9bb0"/><circle cx="518.5" cy="872" r="1.15" fill="#8e9bb0"/><circle cx="523" cy="876" r="1.15" fill="#8e9bb0"/><circle cx="518.5" cy="880" r="1.15" fill="#8e9bb0"/><circle cx="523" cy="884" r="1.15" fill="#8e9bb0"/><circle cx="518.5" cy="888" r="1.15" fill="#8e9bb0"/><circle cx="523" cy="892" r="1.15" fill="#8e9bb0"/><circle cx="518.5" cy="896" r="1.15" fill="#8e9bb0"/><circle cx="523" cy="900" r="1.15" fill="#8e9bb0"/><circle cx="518.5" cy="904" r="1.15" fill="#8e9bb0"/><circle cx="523" cy="908" r="1.15" fill="#8e9bb0"/><circle cx="518.5" cy="912" r="1.15" fill="#8e9bb0"/><circle cx="523" cy="916" r="1.15" fill="#8e9bb0"/><circle cx="518.5" cy="920" r="1.15" fill="#8e9bb0"/><circle cx="523" cy="924" r="1.15" fill="#8e9bb0"/><circle cx="518.5" cy="928" r="1.15" fill="#8e9bb0"/><circle cx="523" cy="932" r="1.15" fill="#8e9bb0"/><circle cx="518.5" cy="936" r="1.15" fill="#8e9bb0"/><circle cx="523" cy="940" r="1.15" fill="#8e9bb0"/><circle cx="518.5" cy="944" r="1.15" fill="#8e9bb0"/><circle cx="523" cy="948" r="1.15" fill="#8e9bb0"/><circle cx="518.5" cy="952" r="1.15" fill="#8e9bb0"/><circle cx="523" cy="956" r="1.15" fill="#8e9bb0"/><circle cx="518.5" cy="960" r="1.15" fill="#8e9bb0"/><circle cx="523" cy="964" r="1.15" fill="#8e9bb0"/><circle cx="518.5" cy="968" r="1.15" fill="#8e9bb0"/><circle cx="523" cy="972" r="1.15" fill="#8e9bb0"/><circle cx="518.5" cy="976" r="1.15" fill="#8e9bb0"/><circle cx="523" cy="980" r="1.15" fill="#8e9bb0"/><circle cx="518.5" cy="984" r="1.15" fill="#8e9bb0"/><circle cx="523" cy="988" r="1.15" fill="#8e9bb0"/><circle cx="518.5" cy="992" r="1.15" fill="#8e9bb0"/><circle cx="523" cy="996" r="1.15" fill="#8e9bb0"/><circle cx="518.5" cy="1000" r="1.15" fill="#8e9bb0"/><circle cx="523" cy="1004" r="1.15" fill="#8e9bb0"/><circle cx="518.5" cy="1008" r="1.15" fill="#8e9bb0"/><circle cx="523" cy="1012" r="1.15" fill="#8e9bb0"/><circle cx="518.5" cy="1016" r="1.15" fill="#8e9bb0"/><circle cx="523" cy="1020" r="1.15" fill="#8e9bb0"/><circle cx="518.5" cy="1024" r="1.15" fill="#8e9bb0"/><circle cx="523" cy="1028" r="1.15" fill="#8e9bb0"/><circle cx="518.5" cy="1032" r="1.15" fill="#8e9bb0"/><circle cx="523" cy="1036" r="1.15" fill="#8e9bb0"/><circle cx="518.5" cy="1040" r="1.15" fill="#8e9bb0"/><circle cx="523" cy="1044" r="1.15" fill="#8e9bb0"/><circle cx="518.5" cy="1048" r="1.15" fill="#8e9bb0"/><circle cx="523" cy="1052" r="1.15" fill="#8e9bb0"/><circle cx="518.5" cy="1056" r="1.15" fill="#8e9bb0"/><circle cx="523" cy="1060" r="1.15" fill="#8e9bb0"/><circle cx="518.5" cy="1064" r="1.15" fill="#8e9bb0"/><circle cx="523" cy="1068" r="1.15" fill="#8e9bb0"/><circle cx="518.5" cy="1072" r="1.15" fill="#8e9bb0"/><circle cx="523" cy="1076" r="1.15" fill="#8e9bb0"/><circle cx="518.5" cy="1080" r="1.15" fill="#8e9bb0"/><circle cx="523" cy="1084" r="1.15" fill="#8e9bb0"/><circle cx="518.5" cy="1088" r="1.15" fill="#8e9bb0"/><circle cx="523" cy="1092" r="1.15" fill="#8e9bb0"/><circle cx="518.5" cy="1096" r="1.15" fill="#8e9bb0"/><circle cx="523" cy="1100" r="1.15" fill="#8e9bb0"/><circle cx="518.5" cy="1104" r="1.15" fill="#8e9bb0"/><circle cx="523" cy="1108" r="1.15" fill="#8e9bb0"/><circle cx="518.5" cy="1112" r="1.15" fill="#8e9bb0"/><circle cx="523" cy="1116" r="1.15" fill="#8e9bb0"/><circle cx="518.5" cy="1120" r="1.15" fill="#8e9bb0"/><circle cx="523" cy="1124" r="1.15" fill="#8e9bb0"/><circle cx="518.5" cy="1128" r="1.15" fill="#8e9bb0"/><circle cx="523" cy="1132" r="1.15" fill="#8e9bb0"/><circle cx="518.5" cy="1136" r="1.15" fill="#8e9bb0"/><circle cx="523" cy="1140" r="1.15" fill="#8e9bb0"/><circle cx="518.5" cy="1144" r="1.15" fill="#8e9bb0"/><circle cx="523" cy="1148" r="1.15" fill="#8e9bb0"/><circle cx="518.5" cy="1152" r="1.15" fill="#8e9bb0"/><circle cx="523" cy="1156" r="1.15" fill="#8e9bb0"/><circle cx="518.5" cy="1160" r="1.15" fill="#8e9bb0"/><circle cx="523" cy="1164" r="1.15" fill="#8e9bb0"/><circle cx="518.5" cy="1168" r="1.15" fill="#8e9bb0"/><circle cx="523" cy="1172" r="1.15" fill="#8e9bb0"/><circle cx="518.5" cy="1176" r="1.15" fill="#8e9bb0"/><circle cx="523" cy="1180" r="1.15" fill="#8e9bb0"/><circle cx="518.5" cy="1184" r="1.15" fill="#8e9bb0"/><circle cx="523" cy="1188" r="1.15" fill="#8e9bb0"/><circle cx="518.5" cy="1192" r="1.15" fill="#8e9bb0"/><circle cx="523" cy="1196" r="1.15" fill="#8e9bb0"/><circle cx="518.5" cy="1200" r="1.15" fill="#8e9bb0"/><circle cx="523" cy="1204" r="1.15" fill="#8e9bb0"/><circle cx="518.5" cy="1208" r="1.15" fill="#8e9bb0"/><circle cx="523" cy="1212" r="1.15" fill="#8e9bb0"/><circle cx="518.5" cy="1216" r="1.15" fill="#8e9bb0"/><circle cx="523" cy="1220" r="1.15" fill="#8e9bb0"/><circle cx="518.5" cy="1224" r="1.15" fill="#8e9bb0"/><circle cx="523" cy="1228" r="1.15" fill="#8e9bb0"/><circle cx="518.5" cy="1232" r="1.15" fill="#8e9bb0"/><circle cx="523" cy="1236" r="1.15" fill="#8e9bb0"/><circle cx="518.5" cy="1240" r="1.15" fill="#8e9bb0"/><circle cx="523" cy="1244" r="1.15" fill="#8e9bb0"/><circle cx="518.5" cy="1248" r="1.15" fill="#8e9bb0"/><circle cx="523" cy="1252" r="1.15" fill="#8e9bb0"/><circle cx="518.5" cy="1256" r="1.15" fill="#8e9bb0"/><circle cx="523" cy="1260" r="1.15" fill="#8e9bb0"/><circle cx="518.5" cy="1264" r="1.15" fill="#8e9bb0"/><circle cx="523" cy="1268" r="1.15" fill="#8e9bb0"/><circle cx="518.5" cy="1272" r="1.15" fill="#8e9bb0"/><circle cx="523" cy="1276" r="1.15" fill="#8e9bb0"/><circle cx="518.5" cy="1280" r="1.15" fill="#8e9bb0"/><circle cx="523" cy="1284" r="1.15" fill="#8e9bb0"/><circle cx="518.5" cy="1288" r="1.15" fill="#8e9bb0"/><circle cx="523" cy="1292" r="1.15" fill="#8e9bb0"/><circle cx="518.5" cy="1296" r="1.15" fill="#8e9bb0"/><circle cx="523" cy="1300" r="1.15" fill="#8e9bb0"/><circle cx="518.5" cy="1304" r="1.15" fill="#8e9bb0"/><circle cx="523" cy="1308" r="1.15" fill="#8e9bb0"/>
<!-- right strip arrow -->
<path d="M1775,734.5 L1764.5,745 L1775,755.5 Z" fill="#e6e6e6" stroke="#666" stroke-width="2" stroke-linejoin="round"/>
<!-- input spinner & help -->
<path d="M1616.5,1339 L1627.5,1339 L1622,1331 Z M1616.5,1344 L1627.5,1344 L1622,1352 Z" fill="#444"/>
<circle cx="1687.5" cy="1341.4" r="12" fill="none" stroke="#b0b0b0" stroke-width="2"/>
<text x="1681.5" y="1349" font-family="Liberation Sans" font-weight="bold" font-size="20" fill="#b0b0b0">?</text>
</svg>
<div class="t" style="left:675.5px;top:23.1px;font-family:'Liberation Sans';font-weight:normal;font-style:normal;font-size:29px;line-height:29px;color:#eeeeee;transform:scaleX(1.0594);-webkit-text-stroke:0.9px #eeeeee">StellaOctangulaEmRotacao.ggb</div>
<div class="t" style="left:22.0px;top:85.1px;font-family:'Liberation Sans';font-weight:normal;font-style:normal;font-size:25.5px;line-height:25.5px;color:#505050;transform:scaleX(1.0059)">Arquivo</div>
<div class="t" style="left:130.6px;top:85.1px;font-family:'Liberation Sans';font-weight:normal;font-style:normal;font-size:25.5px;line-height:25.5px;color:#505050;transform:scaleX(1.0031)">Editar</div>
<div class="t" style="left:221.0px;top:85.1px;font-family:'Liberation Sans';font-weight:normal;font-style:normal;font-size:25.5px;line-height:25.5px;color:#505050;transform:scaleX(0.9770)">Exibir</div>
<div class="t" style="left:308.1px;top:85.1px;font-family:'Liberation Sans';font-weight:normal;font-style:normal;font-size:25.5px;line-height:25.5px;color:#505050;transform:scaleX(0.9419)">Opções</div>
<div class="t" style="left:416.6px;top:85.1px;font-family:'Liberation Sans';font-weight:normal;font-style:normal;font-size:25.5px;line-height:25.5px;color:#505050;transform:scaleX(0.9958)">Ferramentas</div>
<div class="t" style="left:586.9px;top:85.1px;font-family:'Liberation Sans';font-weight:normal;font-style:normal;font-size:25.5px;line-height:25.5px;color:#505050;transform:scaleX(0.9014)">Janela</div>
<div class="t" style="left:682.0px;top:85.1px;font-family:'Liberation Sans';font-weight:normal;font-style:normal;font-size:25.5px;line-height:25.5px;color:#505050;transform:scaleX(0.9492)">Ajuda</div>
<div class="t" style="left:52.7px;top:233.2px;font-family:'Liberation Sans';font-weight:bold;font-style:normal;font-size:25px;line-height:25px;color:#444;transform:scaleX(0.9744)">Janela de Visualização</div>
<div class="t" style="left:573.5px;top:233.9px;font-family:'Liberation Sans';font-weight:normal;font-style:normal;font-size:24.5px;line-height:24.5px;color:#5a5a5a;transform:scaleX(0.9864)">Janela de Visualização 3D</div>
<div class="t" style="left:36.6px;top:285.1px;font-family:'Liberation Sans';font-weight:normal;font-style:normal;font-size:25.5px;line-height:25.5px;color:#333;transform:scaleX(0.9934)">Tamanho: 3.5</div>
<div class="t" style="left:207.1px;top:285.1px;font-family:'Liberation Sans';font-weight:normal;font-style:normal;font-size:25.5px;line-height:25.5px;color:#333;transform:scaleX(0.9522)">Borda: 0.1</div>
<div class="t" style="left:98.0px;top:388.4px;font-family:'Liberation Sans';font-weight:normal;font-style:normal;font-size:25.5px;line-height:25.5px;color:#333;transform:scaleX(1.0000)">Octaedro</div>
<div class="t" style="left:236.9px;top:380.4px;font-family:'Liberation Sans';font-weight:normal;font-style:normal;font-size:25.5px;line-height:25.5px;color:#333;transform:scaleX(0.9314)">R,G,B: 255,255,0</div>
<div class="t" style="left:96.9px;top:459.5px;font-family:'Liberation Sans';font-weight:normal;font-style:normal;font-size:25.5px;line-height:25.5px;color:#333;transform:scaleX(1.0142)">Tetraedro 1</div>
<div class="t" style="left:96.9px;top:528.7px;font-family:'Liberation Sans';font-weight:normal;font-style:normal;font-size:25.5px;line-height:25.5px;color:#333;transform:scaleX(1.0315)">Tetraedro 2</div>
<div class="t" style="left:248.5px;top:549.4px;font-family:'Liberation Sans';font-weight:normal;font-style:normal;font-size:25.5px;line-height:25.5px;color:#333;transform:scaleX(0.9729)">Transparência: 100%</div>
<div class="t" style="left:85.2px;top:616.7px;font-family:'Liberation Serif';font-weight:normal;font-style:normal;font-size:26px;line-height:26px;color:#222;transform:scaleX(1.1514)">Padrão</div>
<div class="t" style="left:38.5px;top:704.1px;font-family:'Liberation Sans';font-weight:normal;font-style:normal;font-size:25.5px;line-height:25.5px;color:#333;transform:scaleX(0.9605)">Velocidade: 3</div>
<div class="t" style="left:90.7px;top:822.6px;font-family:'Liberation Serif';font-weight:normal;font-style:normal;font-size:26px;line-height:26px;color:#222;transform:scaleX(1.2019)">Parar</div>
<div class="t" style="left:540.3px;top:279.3px;font-family:'Liberation Sans';font-weight:bold;font-style:normal;font-size:31px;line-height:31px;color:#111;transform:scaleX(1.0784)">Stella Octangula em Rotação: A Intersecção Dinâmica de Dois Tetraedros</div>
<div class="t" style="left:540.0px;top:318.7px;font-family:'Liberation Sans';font-weight:normal;font-style:italic;font-size:32px;line-height:32px;color:#111;transform:scaleX(0.9541)">Projeto: Rumo a Evolução</div>
<div class="t" style="left:545.1px;top:378.6px;font-family:'Liberation Serif';font-weight:normal;font-style:normal;font-size:32px;line-height:32px;color:#0000ff;transform:scaleX(1.0571);-webkit-text-stroke:0.7px #0000ff;letter-spacing:1.8px">Inspiração</div>
<div class="t" style="left:705.7px;top:390.5px;font-family:'Liberation Serif';font-weight:normal;font-style:normal;font-size:26px;line-height:26px;color:#3030ee;transform:scaleX(1.6667)">:</div>
<div class="t" style="left:719.3px;top:389.6px;font-family:'Liberation Serif';font-weight:normal;font-style:normal;font-size:27px;line-height:27px;color:#3535ee;transform:scaleX(1.0268)">https://www.facebook.com/rinus.roelofs.3/videos/1889382531864105</div>
<div class="t" style="left:27.5px;top:1330.8px;font-family:'Liberation Sans';font-weight:normal;font-style:normal;font-size:26px;line-height:26px;color:#555;transform:scaleX(0.9713)">Entrada:</div>
</body></html>
